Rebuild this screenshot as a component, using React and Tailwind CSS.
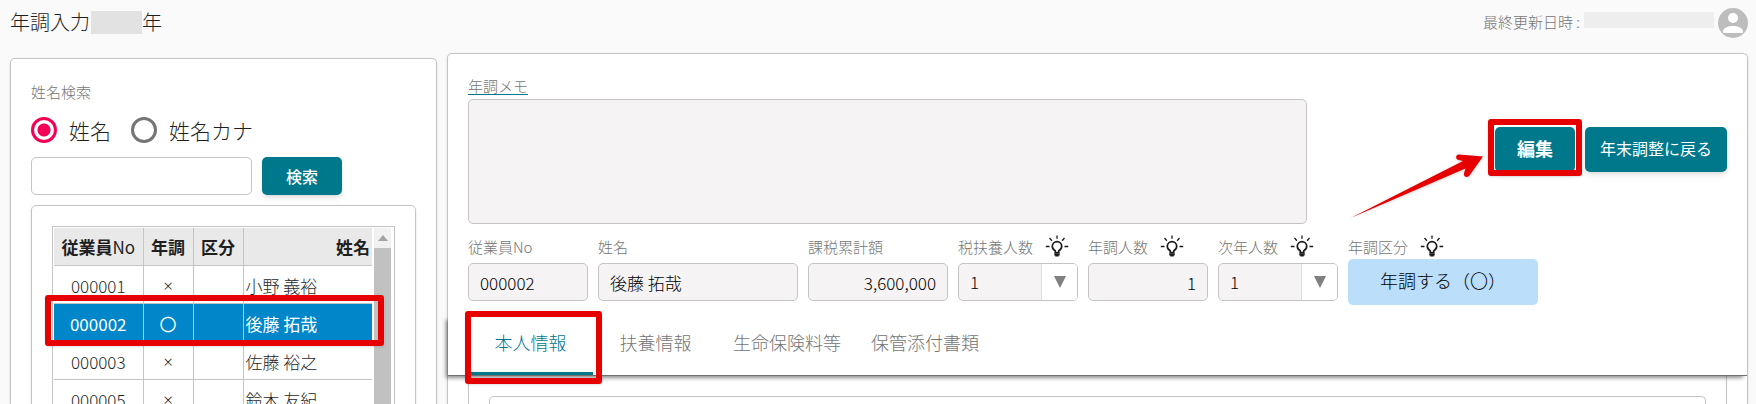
import { useState } from 'react';

const employees = [
  { no: '000001', mark: '×', name: '小野 義裕' },
  { no: '000002', mark: '〇', name: '後藤 拓哉' },
  { no: '000003', mark: '×', name: '佐藤 裕之' },
  { no: '000005', mark: '×', name: '鈴木 友紀' },
];

const tabs = ['本人情報', '扶養情報', '生命保険料等', '保管添付書類'];

const BulbIcon = () => (
  <svg className="w-6 h-6 shrink-0" viewBox="0 0 24 24" fill="none" stroke="#1a1a1a" aria-hidden="true">
    <path d="M12 .5v3.200M4.500 3l2.400 2.700M19.500 3l-2.400 2.700M.8 11.500h3.700M19.500 11.500h3.700" strokeWidth="1.300" />
    <path d="M10.200 17.500v-1.700C8.300 14.800 7.300 13.300 7.300 11.300a4.700 4.700 0 0 1 9.400 0c0 2-1 3.500-2.900 4.500v1.700z" strokeWidth="1.700" />
    <path d="M9.300 18.300h5.400v2.200h-1V21.500h-3.400v-1h-1z" fill="#1a1a1a" stroke="none" />
  </svg>
);

const Avatar = () => (
  <svg className="w-[30px] h-[30px]" viewBox="0 0 30 30" aria-hidden="true">
    <circle cx="15" cy="15" r="15" fill="#bdbdbd" />
    <circle cx="15" cy="10" r="5" fill="#fff" />
    <path d="M5 25v-1.500c0-3.600 5-5.500 10-5.500s10 1.900 10 5.500V25z" fill="#fff" />
  </svg>
);

const Highlight = ({ className }) => (
  <div className={`absolute z-10 border-6 border-[#e60000] rounded-[3px] shadow pointer-events-none ${className}`} />
);

const Radio = ({ id, label, checked, onChange }) => (
  <div className="flex items-center gap-3">
    <input
      type="radio"
      id={id}
      name="searchBy"
      checked={checked}
      onChange={onChange}
      className="appearance-none w-[26px] h-[26px] rounded-full border-[3px] border-[#757575] checked:border-[#f50057] checked:bg-[radial-gradient(circle,#f50057_6px,transparent_7px)]"
    />
    <label htmlFor={id} className="text-[21px] leading-7">{label}</label>
  </div>
);

const Field = ({ id, label, bulb, className, children }) => (
  <div className={className}>
    <div className="flex items-center gap-3 h-6 text-[15px] text-[#757575]">
      <label htmlFor={id} className="whitespace-nowrap">{label}</label>
      {bulb && <BulbIcon />}
    </div>
    {children}
  </div>
);

const inputStyle = 'block w-full h-[38px] mt-1 px-[11px] rounded-[5px] border border-[#c4c4c4] bg-[#f5f3f4] text-[17px] text-black';

const SelectBox = ({ id }) => (
  <div className="relative">
    <select id={id} defaultValue="1" className={`appearance-none ${inputStyle}`}>
      <option>0</option>
      <option>1</option>
      <option>2</option>
    </select>
    <div className="absolute inset-y-px right-px w-9 flex items-center justify-center rounded-r bg-white border-l border-[#dedede] pointer-events-none">
      <svg className="w-3 h-3" viewBox="0 0 12 12" aria-hidden="true">
        <path d="M0 0h12L6 12z" fill="#808080" />
      </svg>
    </div>
  </div>
);

const EmployeeTable = () => (
  <div className="relative border border-[#c4c4c4] p-px flex">
    <div className="flex-1">
      <table className="w-full table-fixed border-collapse text-[17px]">
        <colgroup>
          <col className="w-[89px]" />
          <col className="w-[50px]" />
          <col className="w-[50px]" />
          <col />
        </colgroup>
        <thead>
          <tr className="h-[37px] bg-[#e9e9e9] border-b border-[#c4c4c4]">
            <th className="border-r border-[#c4c4c4] whitespace-nowrap">従業員<span className="font-normal">No</span></th>
            <th className="border-r border-[#c4c4c4]">年調</th>
            <th className="border-r border-[#c4c4c4]">区分</th>
            <th className="text-right pr-0.5">姓名</th>
          </tr>
        </thead>
        <tbody>
          {employees.map((e) => (
            <tr
              key={e.no}
              className={`h-[38px] border-b border-[#c4c4c4] ${e.no === '000002' ? 'bg-[#0086c9] text-white font-normal' : ''}`}
            >
              <td className="border-r border-[#c4c4c4] text-center pt-1">{e.no}</td>
              <td className={`border-r border-[#c4c4c4] text-center pt-1 ${e.mark === '×' ? "font-['Noto_Sans']" : ''}`}>{e.mark}</td>
              <td className="border-r border-[#c4c4c4]" />
              <td className="pl-0.5 pt-1">{e.name}</td>
            </tr>
          ))}
        </tbody>
      </table>
    </div>
    {/* scrollbar */}
    <div className="w-[17px] mx-0.5 bg-[#f1f1f1] flex flex-col">
      <div className="h-5 flex items-center justify-center">
        <svg className="w-2.5 h-1.5" viewBox="0 0 10 6" aria-hidden="true">
          <path d="M0 6h10L5 0z" fill="#a3a3a3" />
        </svg>
      </div>
      <div className="flex-1 bg-[#c1c1c1]" />
    </div>
    <Highlight className="-left-2 top-[68px] right-2.5 h-[51px]" />
  </div>
);

const SearchPanel = () => {
  const [searchBy, setSearchBy] = useState('name');

  return (
    <aside className="w-[427px] shrink-0 mt-[5px] px-5 pt-[21px] bg-white border border-b-0 border-[#c4c4c4] rounded-t-[5px] shadow-sm">
      <label htmlFor="keyword" className="block text-[15px] leading-6 text-[#757575]">姓名検索</label>
      <div className="flex gap-5 mt-3">
        <Radio id="byName" label="姓名" checked={searchBy === 'name'} onChange={() => setSearchBy('name')} />
        <Radio id="byKana" label="姓名カナ" checked={searchBy === 'kana'} onChange={() => setSearchBy('kana')} />
      </div>
      <div className="flex gap-2.5 mt-[13px]">
        <input id="keyword" type="text" className="w-[221px] h-[38px] px-3 border border-[#c4c4c4] rounded-[5px]" />
        <button className="w-20 h-[38px] rounded-[5px] bg-[#00788c] text-white text-base font-medium shadow-md">検索</button>
      </div>
      <div className="mt-2.5 p-5 border border-[#c4c4c4] rounded-[5px] shadow-sm">
        <EmployeeTable />
      </div>
    </aside>
  );
};

const DetailPanel = () => {
  const [tab, setTab] = useState(tabs[0]);

  return (
    <main className="flex-1 min-w-0 flex flex-col bg-white border border-b-0 border-[#c4c4c4] rounded-t-[5px] shadow-sm">
      <div className="px-5 pt-[22px]">
        <div className="flex justify-between">
          <div>
            <label htmlFor="memo" className="block w-fit h-[19px] text-[15px] leading-[19px] text-[#757575] border-b border-[#00788c]">年調メモ</label>
            <textarea id="memo" className="block w-[839px] h-[125px] mt-1 resize-none border border-[#c4c4c4] rounded-[5px] bg-[#f5f3f4]" />
          </div>
          <div className="flex gap-2.5 mt-[51px] h-[45px]">
            <div className="relative">
              <button className="w-20 h-full pb-1 rounded-[5px] bg-[#00788c] text-white text-lg font-bold shadow-md">編集</button>
              <Highlight className="-left-[7px] -right-[7px] -top-2 -bottom-1" />
              {/* arrow pointing at the edit button */}
              <svg className="absolute right-[90px] top-6 w-[136px] h-[70px] drop-shadow" viewBox="0 0 136 70" aria-hidden="true">
                <path
                  d="M1.500 67L114 10l-4.500-1c-3.500-.8-3-5.500.5-5.500L134 5.500L120.500 24.500c-2 2.800-6.500 1.200-5.500-2.200l1.500-4.800z"
                  fill="#e60000"
                />
              </svg>
            </div>
            <button className="w-[142px] pb-1 rounded-[5px] bg-[#00788c] text-white text-base font-normal shadow-md">年末調整に戻る</button>
          </div>
        </div>

        <div className="flex gap-2.5 mt-[11px]">
          <Field id="empNo" label="従業員No" className="w-[120px]">
            <input id="empNo" readOnly defaultValue="000002" className={inputStyle} />
          </Field>
          <Field id="empName" label="姓名" className="w-[200px]">
            <input id="empName" readOnly defaultValue="後藤 拓哉" className={inputStyle} />
          </Field>
          <Field id="taxable" label="課税累計額" className="w-[140px]">
            <input id="taxable" readOnly defaultValue="3,600,000" className={`text-right ${inputStyle}`} />
          </Field>
          <Field id="dependents" label="税扶養人数" bulb className="w-[120px]">
            <SelectBox id="dependents" />
          </Field>
          <Field id="adjusted" label="年調人数" bulb className="w-[120px]">
            <input id="adjusted" readOnly defaultValue="1" className={`text-right ${inputStyle}`} />
          </Field>
          <Field id="nextYear" label="次年人数" bulb className="w-[120px]">
            <SelectBox id="nextYear" />
          </Field>
          <Field id="category" label="年調区分" bulb className="w-[190px]">
            <button id="category" className="block w-full h-[46px] pb-1 rounded-[5px] bg-[#bbdefb] text-lg text-black">年調する（〇）</button>
          </Field>
        </div>
      </div>

      <div className="relative mt-[11px] px-5 h-[60px] flex bg-white border-b border-[#707070] shadow-[-3px_3px_4px_-1px_rgba(0,0,0,0.45)]">
        {tabs.map((t) => (
          <div key={t} className="relative">
            <button
              onClick={() => setTab(t)}
              className={`min-w-[125px] h-full px-[15px] pb-1 text-lg border-b-3 ${t === tab ? 'text-[#00788c] border-[#00788c]' : 'text-[#757575] border-transparent'}`}
            >
              {t}
            </button>
            {t === tab && <Highlight className="-left-[3px] -right-[9px] -top-[5px] -bottom-[9px]" />}
          </div>
        ))}
      </div>

      <div className="flex-1 mx-5 p-5 pb-0 flex border-x border-[#c4c4c4]">
        <div className="flex-1 border border-b-0 border-[#c4c4c4] rounded-t-[5px]" />
      </div>
    </main>
  );
};

export default function App() {
  return (
    <div className="h-screen overflow-hidden flex flex-col bg-[#fafafa] text-[#1f1f1f] font-light font-['Noto_Sans_CJK_JP',sans-serif]">
      <header className="h-[53px] shrink-0 pl-2.5 pr-2 pt-2 flex justify-between items-start">
        <h1 className="flex items-center text-xl leading-7">
          年調入力<span className="w-[51px] h-[23px] ml-px bg-[#e2e2e2]" />年
        </h1>
        <div className="flex items-start gap-1 text-[15px] leading-7 text-[#757575]">
          <span>最終更新日時 :</span>
          <span className="w-[130px] h-4 mt-1 bg-[#eeeeee]" />
          <Avatar />
        </div>
      </header>
      <div className="flex-1 min-h-0 flex gap-2.5 pl-2.5 pr-2">
        <SearchPanel />
        <DetailPanel />
      </div>
    </div>
  );
}
